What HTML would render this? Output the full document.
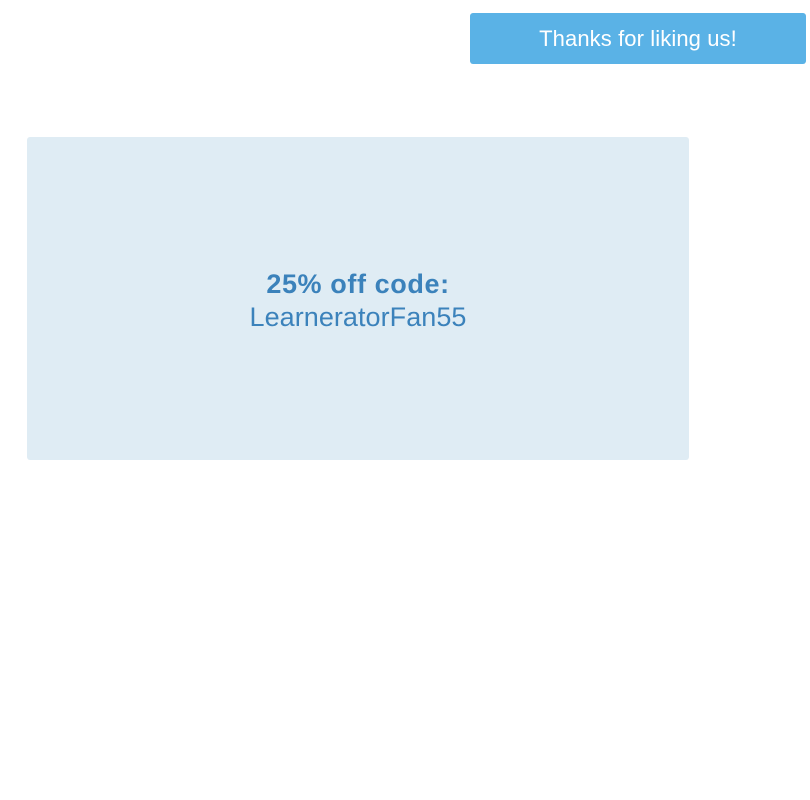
<!DOCTYPE html>
<html><head><style>
html,body{margin:0;padding:0;background:#fff;width:810px;height:800px;overflow:hidden;font-family:"Liberation Sans",Arial,sans-serif;}
.btn{position:absolute;left:470px;top:13px;width:336px;height:51px;background:#5ab2e6;border-radius:3px;color:#fff;font-size:22px;line-height:51px;text-align:center;letter-spacing:0.1px;}
.box{position:absolute;left:27px;top:137px;width:662px;height:323px;background:#dfecf4;border-radius:3px;color:#3b82bb;text-align:center;}
.t1{position:absolute;top:132px;width:100%;font-size:27px;font-weight:bold;letter-spacing:0.6px;}
.t2{position:absolute;top:165px;width:100%;font-size:27px;letter-spacing:0.05px;}
</style></head><body>
<div class="btn">Thanks for liking us!</div>
<div class="box"><div class="t1">25% off code:</div><div class="t2">LearneratorFan55</div></div>
</body></html>
